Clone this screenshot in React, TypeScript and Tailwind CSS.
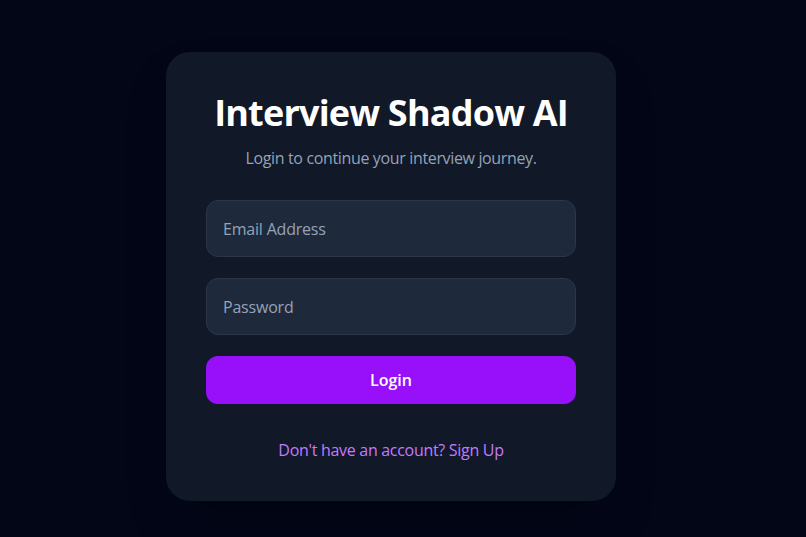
import React from "react";

export default function App() {
  return (
    <div
      className="min-h-screen w-full bg-[#020617] flex justify-center pt-[52px] pr-[24px]"
      style={{ fontFamily: '"Open Sans", "Noto Sans", sans-serif' }}
    >
      <div className="w-[450px] h-[449px] bg-[#111827] rounded-3xl px-10 pt-10 flex flex-col shadow-2xl">
        <h1 className="text-[36px] leading-[40px] font-bold text-white text-center tracking-[-0.8px] mt-[1px]">
          Interview Shadow AI
        </h1>
        <p className="mt-[13px] text-[16px] leading-6 text-[#94a3b8] text-center tracking-[-0.35px]">
          Login to continue your interview journey.
        </p>
        <input
          type="email"
          placeholder="Email Address"
          className="mt-[30px] h-[57px] w-full rounded-xl bg-[#1e293b] border border-[#2b3648] px-4 text-[16px] text-white placeholder:text-[#94a3b8] outline-none tracking-[-0.2px]"
        />
        <input
          type="password"
          placeholder="Password"
          className="mt-[21px] h-[57px] w-full rounded-xl bg-[#1e293b] border border-[#2b3648] px-4 text-[16px] text-white placeholder:text-[#94a3b8] outline-none tracking-[-0.2px]"
        />
        <button className="mt-[21px] h-[48px] w-full rounded-xl bg-[#9810fa] text-white font-semibold text-[16px]">
          Login
        </button>
        <p className="mt-[34px] text-center text-[16px] leading-6 text-[#c27aff] tracking-[-0.3px]">
          Don't have an account? Sign Up
        </p>
      </div>
    </div>
  );
}
